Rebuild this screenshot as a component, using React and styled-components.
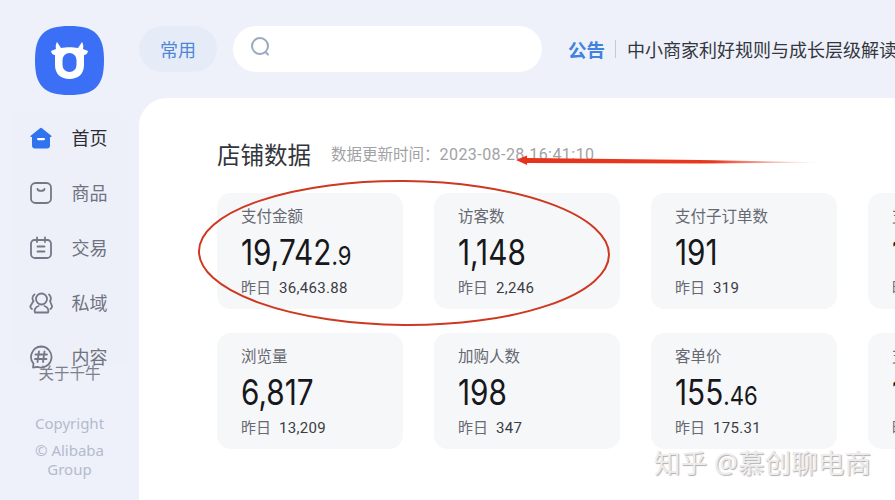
import React from "react";
import styled, { createGlobalStyle } from "styled-components";

const Global = createGlobalStyle`
  html, body {
    margin: 0;
    padding: 0;
    background: #eef1fa;
    overflow: hidden;
  }
  * { box-sizing: border-box; }
`;

const CJK = `"Noto Sans", "Noto Sans CJK SC", sans-serif`;
const NUM = `Roboto, "Noto Sans CJK SC", sans-serif`;

const Page = styled.div`
  position: relative;
  display: flex;
  width: 895px;
  height: 500px;
  overflow: hidden;
  background: #eef1fa;
  font-family: ${CJK};
`;

const Sidebar = styled.aside`
  flex: 0 0 139px;
  display: flex;
  flex-direction: column;
  align-items: center;
  padding-top: 26px;
`;

const Logo = styled.div`
  width: 69px;
  height: 69px;
  svg { display: block; }
`;

const Nav = styled.nav`
  width: 116px;
  height: 255px;
  margin-top: 16px;
  background: #edf0f9;
  border-radius: 8px;
  display: flex;
  flex-direction: column;
`;

const NavItem = styled.div`
  flex: 0 0 54.75px;
  display: flex;
  align-items: center;
  gap: 19px;
  padding-left: 17px;
  font-size: 18px;
  line-height: 24px;
  color: ${(p) => (p.$active ? "#2b2d33" : "#6f7380")};
  svg { display: block; flex: none; }
`;

const Footer = styled.div`
  width: 100%;
  margin-top: -3px;
  text-align: center;
  position: relative;
`;

const About = styled.div`
  font-size: 15.5px;
  line-height: 20px;
  color: #7c808c;
`;

const Legal = styled.div`
  margin-top: 31px;
  padding: 0 30px;
  font-size: 15px;
  line-height: 19px;
  color: #b3bbcd;
  p { margin: 0 0 8px; }
`;

const Right = styled.div`
  flex: 1;
  min-width: 0;
  display: flex;
  flex-direction: column;
`;

const TopBar = styled.header`
  flex: 0 0 98px;
  display: flex;
  align-items: flex-start;
  padding-top: 26px;
`;

const Pill = styled.div`
  flex: none;
  width: 78px;
  height: 46px;
  border-radius: 23px;
  background: #e6ecf7;
  color: #4f86d8;
  font-size: 18px;
  display: flex;
  align-items: center;
  justify-content: center;
`;

const Search = styled.div`
  flex: none;
  width: 309px;
  height: 46px;
  margin-left: 16px;
  border-radius: 23px;
  background: #fff;
  display: flex;
  align-items: center;
  padding: 0 0 5px 17px;
`;

const Notice = styled.div`
  flex: none;
  height: 46px;
  margin-left: 26px;
  display: flex;
  align-items: center;
  font-size: 18px;
  white-space: nowrap;
`;

const NoticeTag = styled.b`
  color: #3f82e0;
  font-size: 18.5px;
  font-weight: 700;
`;

const NoticeRule = styled.i`
  width: 1px;
  height: 18px;
  margin: 0 11px 0 10px;
  background: #bccbe0;
`;

const NoticeText = styled.span`
  color: #33363c;
`;

const Main = styled.main`
  flex: 1;
  background: #fff;
  border-top-left-radius: 28px;
  padding: 39px 0 0 78px;
`;

const TitleRow = styled.div`
  display: flex;
  align-items: center;
  height: 34px;
  margin-bottom: 22px;
`;

const Title = styled.h2`
  margin: 0;
  font-size: 23.5px;
  font-weight: 400;
  color: #33363c;
  white-space: nowrap;
`;

const Updated = styled.span`
  margin-left: 20px;
  padding-bottom: 1px;
  font-size: 16px;
  letter-spacing: 0.45px;
  color: #a2a2a6;
  white-space: nowrap;
  font-family: ${NUM};
  span {
    font-family: ${CJK};
    font-size: 15.5px;
    letter-spacing: 0;
  }
`;

const Grid = styled.div`
  display: grid;
  grid-template-columns: repeat(4, 186px);
  grid-auto-rows: 116px;
  gap: 24px 31px;
`;

const Card = styled.div`
  background: #f6f7f9;
  border-radius: 14px;
  padding: 13px 0 0 24px;
  white-space: nowrap;
`;

const Label = styled.div`
  font-size: 15.5px;
  line-height: 20px;
  color: #666972;
`;

/* Inter has the narrow proportional 1; squeezed to the DIN-like widths of the figures */
const Value = styled.div`
  margin-top: 5px;
  height: 42px;
  font-family: Inter, sans-serif;
  font-size: 35px;
  line-height: 42px;
  color: #17181c;
  transform: scaleX(0.85);
  transform-origin: left center;
  small {
    font-size: 26px;
  }
`;

const Prev = styled.div`
  margin-top: 4px;
  font-size: 15px;
  line-height: 20px;
  color: #666972;
  b {
    margin-left: 8px;
    font-family: ${NUM};
    font-weight: 400;
    letter-spacing: 0.3px;
    color: #3b3d44;
  }
`;

const Overlay = styled.svg`
  position: absolute;
  left: 0;
  top: 0;
  pointer-events: none;
`;

const Watermark = styled.div`
  position: absolute;
  left: 654px;
  top: 446px;
  font-size: 26.6px;
  line-height: 34px;
  white-space: nowrap;
  color: #ececee;
  text-shadow: 1px 1px 1px #b0b0b2;
`;

const HomeIcon = () => (
  <svg width="24" height="22" viewBox="0 0 24 22">
    <path d="M11 1.2 a1.5 1.5 0 0 1 2 0 L22 8.4 c.9.7.7 1.6-.4 1.6 H21 v8.5 a3 3 0 0 1-3 3 H6 a3 3 0 0 1-3-3 V10 H2.4 c-1.100 0-1.300-.9-.4-1.600 Z" fill="#2f74ee" />
    <rect x="8" y="11" width="8" height="2.200" rx="1.100" fill="#fff" />
  </svg>
);

const ProductIcon = () => (
  <svg width="24" height="24" viewBox="0 0 24 24" fill="none" stroke="#747886" strokeWidth="1.800" strokeLinecap="round">
    <rect x="2" y="2" width="20" height="20" rx="4.500" />
    <path d="M8.500 8 c.5 2.500 6.500 2.500 7 0" />
  </svg>
);

const TradeIcon = () => (
  <svg width="24" height="24" viewBox="0 0 24 24" fill="none" stroke="#747886" strokeWidth="1.800" strokeLinecap="round">
    <path d="M7 4 H5.500 A3.500 3.500 0 0 0 2 7.500 V18 a4 4 0 0 0 4 4 H18 a4 4 0 0 0 4-4 V7.500 A3.500 3.500 0 0 0 18.500 4 H17" />
    <path d="M8 1.500 V6 M16 1.500 V6 M8 4 H16 M8.500 10.500 H15.500 M8.500 15.500 H15.500" />
  </svg>
);

const PrivateIcon = () => (
  <svg width="24" height="22" viewBox="0 0 24 22" fill="none" stroke="#747886" strokeWidth="1.800" strokeLinecap="round" strokeLinejoin="round">
    <circle cx="12.500" cy="7" r="5.500" />
    <path d="M6 20.500 c-1-1.800 0-5.500 3.500-6.500 M19 20.500 c1-1.800 0-5.500-3.500-6.500 M6 20.500 H19" />
    <path d="M5.500 2.500 c-2.500 1.500-2.500 5 -1 6.500 L1.500 14 c-.5 1 0 2 1.500 3 M20 2.500 c2 1.500 2.500 5 1 6.500 L23 14 c.3 1-.3 2-1.500 3" />
  </svg>
);

const ContentIcon = () => (
  <svg width="24" height="24" viewBox="0 0 24 24" fill="none" stroke="#747886" strokeWidth="1.800" strokeLinecap="round" strokeLinejoin="round">
    <path d="M12 1.500 a10.500 10.500 0 1 1 -3.500 20.400 L4 22.500 l.5-3.800 A10.500 10.500 0 0 1 12 1.500 Z" />
    <path d="M10 6.500 L8.500 17 M15.500 6.500 L14 17 M6.500 9.500 H18 M6 14 H17.500" />
  </svg>
);

const navItems = [
  { text: "首页", icon: <HomeIcon />, active: true },
  { text: "商品", icon: <ProductIcon /> },
  { text: "交易", icon: <TradeIcon /> },
  { text: "私域", icon: <PrivateIcon /> },
  { text: "内容", icon: <ContentIcon /> },
];

const stats = [
  { label: "支付金额", value: "19,742", frac: ".9", prev: "36,463.88" },
  { label: "访客数", value: "1,148", prev: "2,246" },
  { label: "支付子订单数", value: "191", prev: "319" },
  { label: "支付买家数", value: "168", prev: "290" },
  { label: "浏览量", value: "6,817", prev: "13,209" },
  { label: "加购人数", value: "198", prev: "347" },
  { label: "客单价", value: "155", frac: ".46", prev: "175.31" },
  { label: "支付转化率", value: "14.6", prev: "12.9" },
];

export default function App() {
  return (
    <Page>
      <Global />
      <Sidebar>
        <Logo>
          <svg width="69" height="69" viewBox="0 0 69 69">
            <path d="M34.500 0 C60 0 69 9 69 34.500 C69 60 60 69 34.500 69 C9 69 0 60 0 34.500 C0 9 9 0 34.500 0 Z" fill="#3b6ff5" />
            <path d="M22 16 L26 22 C31 21 38 21 43 22 L47 16 C48.500 18 48.500 21 48 23 L53 25 C52.500 27.500 51 29 49 29 V39 C49 48 43 53 34.500 53 C26 53 20 48 20 39 V29 C18 29 16.500 27.500 16 25 L21 23 C20.500 21 20.500 18 22 16 Z" fill="#fff" />
            <rect x="27.500" y="27" width="14" height="19" rx="7" fill="#3b6ff5" />
          </svg>
        </Logo>
        <Nav>
          {navItems.map((item) => (
            <NavItem key={item.text} $active={item.active}>
              {item.icon}
              <span>{item.text}</span>
            </NavItem>
          ))}
        </Nav>
        <Footer>
          <About>关于千牛</About>
          <Legal>
            <p>Copyright</p>
            <div>© Alibaba Group</div>
          </Legal>
        </Footer>
      </Sidebar>
      <Right>
        <TopBar>
          <Pill>常用</Pill>
          <Search>
            <svg width="22" height="22" viewBox="0 0 22 22" fill="none" stroke="#9aa9bf" strokeWidth="2" strokeLinecap="round">
              <circle cx="10" cy="10" r="8" />
              <path d="M16 16.500 L18 18.500" />
            </svg>
          </Search>
          <Notice>
            <NoticeTag>公告</NoticeTag>
            <NoticeRule />
            <NoticeText>中小商家利好规则与成长层级解读</NoticeText>
          </Notice>
        </TopBar>
        <Main>
          <TitleRow>
            <Title>店铺数据</Title>
            <Updated><span>数据更新时间：</span>2023-08-28 16:41:10</Updated>
          </TitleRow>
          <Grid>
            {stats.map((s) => (
              <Card key={s.label}>
                <Label>{s.label}</Label>
                <Value>{s.value}{s.frac && <small>{s.frac}</small>}</Value>
                <Prev>昨日<b>{s.prev}</b></Prev>
              </Card>
            ))}
          </Grid>
        </Main>
      </Right>
      <Overlay width="895" height="500" viewBox="0 0 895 500">
        <defs>
          <linearGradient id="arrowFade" x1="516" x2="820" y1="0" y2="0" gradientUnits="userSpaceOnUse">
            <stop offset="0" stopColor="#e8321c" />
            <stop offset="0.65" stopColor="#e8381c" />
            <stop offset="1" stopColor="#e8a08c" stopOpacity="0.15" />
          </linearGradient>
        </defs>
        <ellipse cx="404" cy="253" rx="205" ry="72" fill="none" stroke="#cf3820" strokeWidth="2" transform="rotate(0.500 404 253)" />
        <path d="M516 160 L527 155.500 L527 158 L700 160 L822 162.500 L700 163.500 L527 163 L527 165 Z" fill="url(#arrowFade)" />
      </Overlay>
      <Watermark>知乎 @慕创聊电商</Watermark>
    </Page>
  );
}
